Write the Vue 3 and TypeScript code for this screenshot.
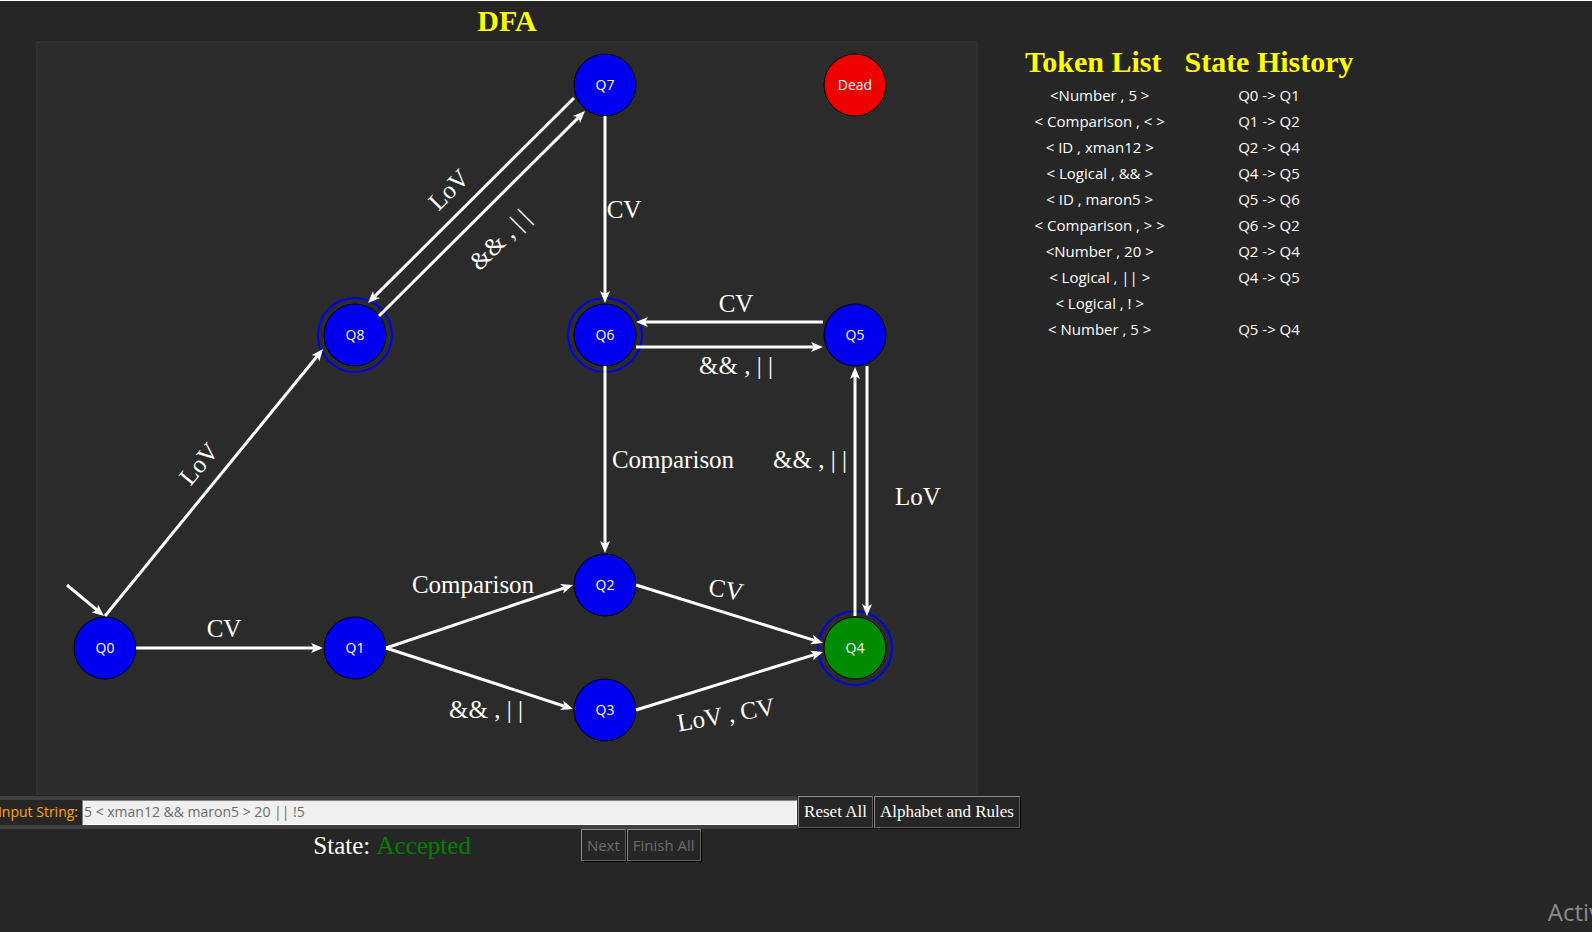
<script setup lang="ts">
import { ref } from 'vue'

interface StateNode {
  name: string
  x: number
  y: number
  kind: 'normal' | 'current' | 'dead'
  accepting?: boolean
}

interface Edge {
  from: [number, number]
  to: [number, number]
}

interface EdgeLabel {
  text: string
  x: number
  y: number
  angle?: number
}

const nodes: StateNode[] = [
  { name: 'Q0', x: 69, y: 607, kind: 'normal' },
  { name: 'Q1', x: 319, y: 607, kind: 'normal' },
  { name: 'Q2', x: 569, y: 544, kind: 'normal' },
  { name: 'Q3', x: 569, y: 669, kind: 'normal' },
  { name: 'Q4', x: 819, y: 607, kind: 'current', accepting: true },
  { name: 'Q5', x: 819, y: 294, kind: 'normal' },
  { name: 'Q6', x: 569, y: 294, kind: 'normal', accepting: true },
  { name: 'Q7', x: 569, y: 44, kind: 'normal' },
  { name: 'Q8', x: 319, y: 294, kind: 'normal', accepting: true },
  { name: 'Dead', x: 819, y: 44, kind: 'dead' },
]

const edges: Edge[] = [
  { from: [31, 544], to: [68, 575] },
  { from: [69, 575], to: [287, 308] },
  { from: [100, 607], to: [287, 607] },
  { from: [350, 607], to: [537, 544] },
  { from: [350, 607], to: [537, 668] },
  { from: [600, 544], to: [787, 602] },
  { from: [600, 669], to: [787, 611] },
  { from: [538, 57], to: [332, 262] },
  { from: [343, 275], to: [549, 70] },
  { from: [569, 75], to: [569, 262] },
  { from: [569, 325], to: [569, 512] },
  { from: [787, 281], to: [600, 281] },
  { from: [600, 306], to: [787, 306] },
  { from: [819, 575], to: [819, 326] },
  { from: [831, 325], to: [831, 575] },
]

const labels: EdgeLabel[] = [
  { text: 'LoV', x: 163, y: 423, angle: -50 },
  { text: 'CV', x: 188, y: 588 },
  { text: 'Comparison', x: 437, y: 544 },
  { text: '&& , | |', x: 450, y: 669 },
  { text: 'CV', x: 690, y: 549, angle: 10 },
  { text: 'LoV , CV', x: 690, y: 674, angle: -10 },
  { text: 'LoV', x: 413, y: 149, angle: -45 },
  { text: '&& , | |', x: 464, y: 199, angle: -45 },
  { text: 'CV', x: 588, y: 169 },
  { text: 'CV', x: 700, y: 263 },
  { text: '&& , | |', x: 700, y: 325 },
  { text: 'Comparison', x: 637, y: 419 },
  { text: '&& , | |', x: 774, y: 419 },
  { text: 'LoV', x: 882, y: 456 },
]

const history: { token: string; step: string }[] = [
  { token: '<Number , 5 >', step: 'Q0 -> Q1' },
  { token: '< Comparison , < >', step: 'Q1 -> Q2' },
  { token: '< ID , xman12 >', step: 'Q2 -> Q4' },
  { token: '< Logical , && >', step: 'Q4 -> Q5' },
  { token: '< ID , maron5 >', step: 'Q5 -> Q6' },
  { token: '< Comparison , > >', step: 'Q6 -> Q2' },
  { token: '<Number , 20 >', step: 'Q2 -> Q4' },
  { token: '< Logical , || >', step: 'Q4 -> Q5' },
  { token: '< Logical , ! >', step: '' },
  { token: '< Number , 5 >', step: 'Q5 -> Q4' },
]

const source = ref('5 < xman12 && maron5 > 20 || !5')

const NECK = 9

// The shaft stops at the neck of the arrow head so that the tip stays sharp.
function shaftEnd(e: Edge): [number, number] {
  const dx = e.to[0] - e.from[0]
  const dy = e.to[1] - e.from[1]
  const len = Math.hypot(dx, dy)
  return [e.to[0] - (dx / len) * NECK, e.to[1] - (dy / len) * NECK]
}

function headTransform(e: Edge): string {
  const angle = (Math.atan2(e.to[1] - e.from[1], e.to[0] - e.from[0]) * 180) / Math.PI
  return `translate(${e.to[0]} ${e.to[1]}) rotate(${angle})`
}
</script>

<template>
  <main class="window">
    <section class="machine">
      <h1 class="title">DFA</h1>
      <svg class="canvas" viewBox="0 0 942 754" role="img" aria-label="State diagram">
        <rect class="frame" x="1" y="1" width="940" height="752" />
        <g v-for="n in nodes" :key="n.name">
          <circle v-if="n.accepting" class="ring" :cx="n.x" :cy="n.y" r="37" />
          <circle class="node" :class="n.kind" :cx="n.x" :cy="n.y" r="31" />
          <text class="node-name" :x="n.x" :y="n.y + 5">{{ n.name }}</text>
        </g>
        <g v-for="(e, i) in edges" :key="i">
          <line class="shaft" :x1="e.from[0]" :y1="e.from[1]" :x2="shaftEnd(e)[0]" :y2="shaftEnd(e)[1]" />
          <polygon class="head" points="0,0 -12,-5 -9,0 -12,5" :transform="headTransform(e)" />
        </g>
        <text
          v-for="(l, i) in labels"
          :key="i"
          class="edge-label"
          :transform="`translate(${l.x} ${l.y}) rotate(${l.angle ?? 0})`"
          y="8"
        >{{ l.text }}</text>
      </svg>

      <form class="entry" @submit.prevent>
        <div class="field">
          <label for="source">Input String:</label>
          <input id="source" v-model="source" type="text" />
        </div>
        <button type="button" class="serif">Reset All</button>
        <button type="button" class="serif">Alphabet and Rules</button>
      </form>

      <div class="status">
        <p class="state">State: <output class="verdict">Accepted</output></p>
        <div class="steps">
          <button type="button" disabled>Next</button>
          <button type="button" disabled>Finish All</button>
        </div>
      </div>
    </section>

    <table class="history">
      <thead>
        <tr>
          <th scope="col">Token List</th>
          <th scope="col">State History</th>
        </tr>
      </thead>
      <tbody>
        <tr v-for="(row, i) in history" :key="i">
          <td>{{ row.token }}</td>
          <td>{{ row.step }}</td>
        </tr>
      </tbody>
    </table>

    <p class="notice">Activ</p>
  </main>
</template>

<style>
body {
  background: #262626;
}
</style>

<style scoped>
.window {
  position: relative;
  display: flex;
  align-items: flex-start;
  box-sizing: border-box;
  min-height: 100vh;
  border-top: 1px solid #fff;
  overflow: hidden;
  background: #262626;
  color: #fff;
  font: 14px/20px "Open Sans", "Noto Sans", sans-serif;
}

.machine {
  flex: 0 1 1026px;
  min-width: 0;
  margin-left: -6px;
  display: flex;
  flex-direction: column;
  align-items: center;
}

.title {
  margin: 0;
  color: #ff0;
  font: bold 30px/40px "Liberation Serif", serif;
}

.canvas {
  display: block;
  width: 100%;
  max-width: 942px;
  height: auto;
}

.frame {
  fill: #2b2b2b;
  stroke: #303030;
  stroke-width: 2;
}

.ring {
  fill: none;
  stroke: #0000ee;
  stroke-width: 2;
}

.node {
  fill: #0000ee;
  stroke: #000;
  stroke-width: 1;
}

.node.current {
  fill: #008b00;
}

.node.dead {
  fill: #ee0000;
}

.node-name {
  fill: #fff;
  font-size: 14px;
  text-anchor: middle;
}

.shaft {
  stroke: #fff;
  stroke-width: 3;
}

.head {
  fill: #fff;
}

.edge-label {
  fill: #fff;
  font: 25px "Liberation Serif", serif;
  text-anchor: middle;
}

.entry {
  display: flex;
  width: 100%;
  gap: 1px;
  margin-top: 1px;
}

.field {
  flex: 1;
  min-width: 0;
  display: flex;
  box-sizing: border-box;
  height: 33px;
  border: solid #404040;
  border-width: 4px 0;
}

.field label {
  flex: none;
  box-sizing: border-box;
  width: 88px;
  padding-right: 4px;
  background: #262626;
  color: #ffa500;
  line-height: 24px;
  text-align: right;
  white-space: nowrap;
}

.field input {
  flex: 1;
  min-width: 0;
  padding: 0 1px 2px;
  border: 1px solid;
  border-color: #808080 #fff #fff #808080;
  border-radius: 0;
  background: #f0f0f0;
  color: #6d6d6d;
  font: inherit;
  outline: none;
}

button {
  box-sizing: border-box;
  height: 32px;
  padding: 0 5px;
  border: 1px solid;
  border-color: #8c8c8c #606060 #606060 #8c8c8c;
  border-radius: 0;
  box-shadow: 1px 1px 0 #000;
  background: #262626;
  color: #fff;
  font: 15px/20px "Open Sans", "Noto Sans", sans-serif;
  white-space: nowrap;
}

button.serif {
  font: 17px/20px "Liberation Serif", serif;
}

button:disabled {
  color: #6d6d6d;
}

.status {
  display: flex;
  justify-content: center;
  gap: 110px;
}

.state {
  margin: 0;
  font: 25px/34px "Liberation Serif", serif;
}

.verdict {
  color: #008000;
}

.steps {
  display: flex;
  gap: 1px;
}

.history {
  margin-top: 40px;
  border-collapse: collapse;
  font-size: 15px;
  text-align: center;
}

.history th {
  padding: 0 8px;
  color: #ff0;
  font: bold 30px/41px "Liberation Serif", serif;
  white-space: nowrap;
}

.history th:first-child {
  padding: 0 15px 0 5px;
}

.history td {
  height: 26px;
  padding: 0 0 0 3px;
}

.history td:last-child {
  padding: 0;
}

.notice {
  position: absolute;
  right: -9px;
  bottom: 5px;
  margin: 0;
  color: #8a8a8a;
  font-size: 24px;
  line-height: 30px;
}
</style>
